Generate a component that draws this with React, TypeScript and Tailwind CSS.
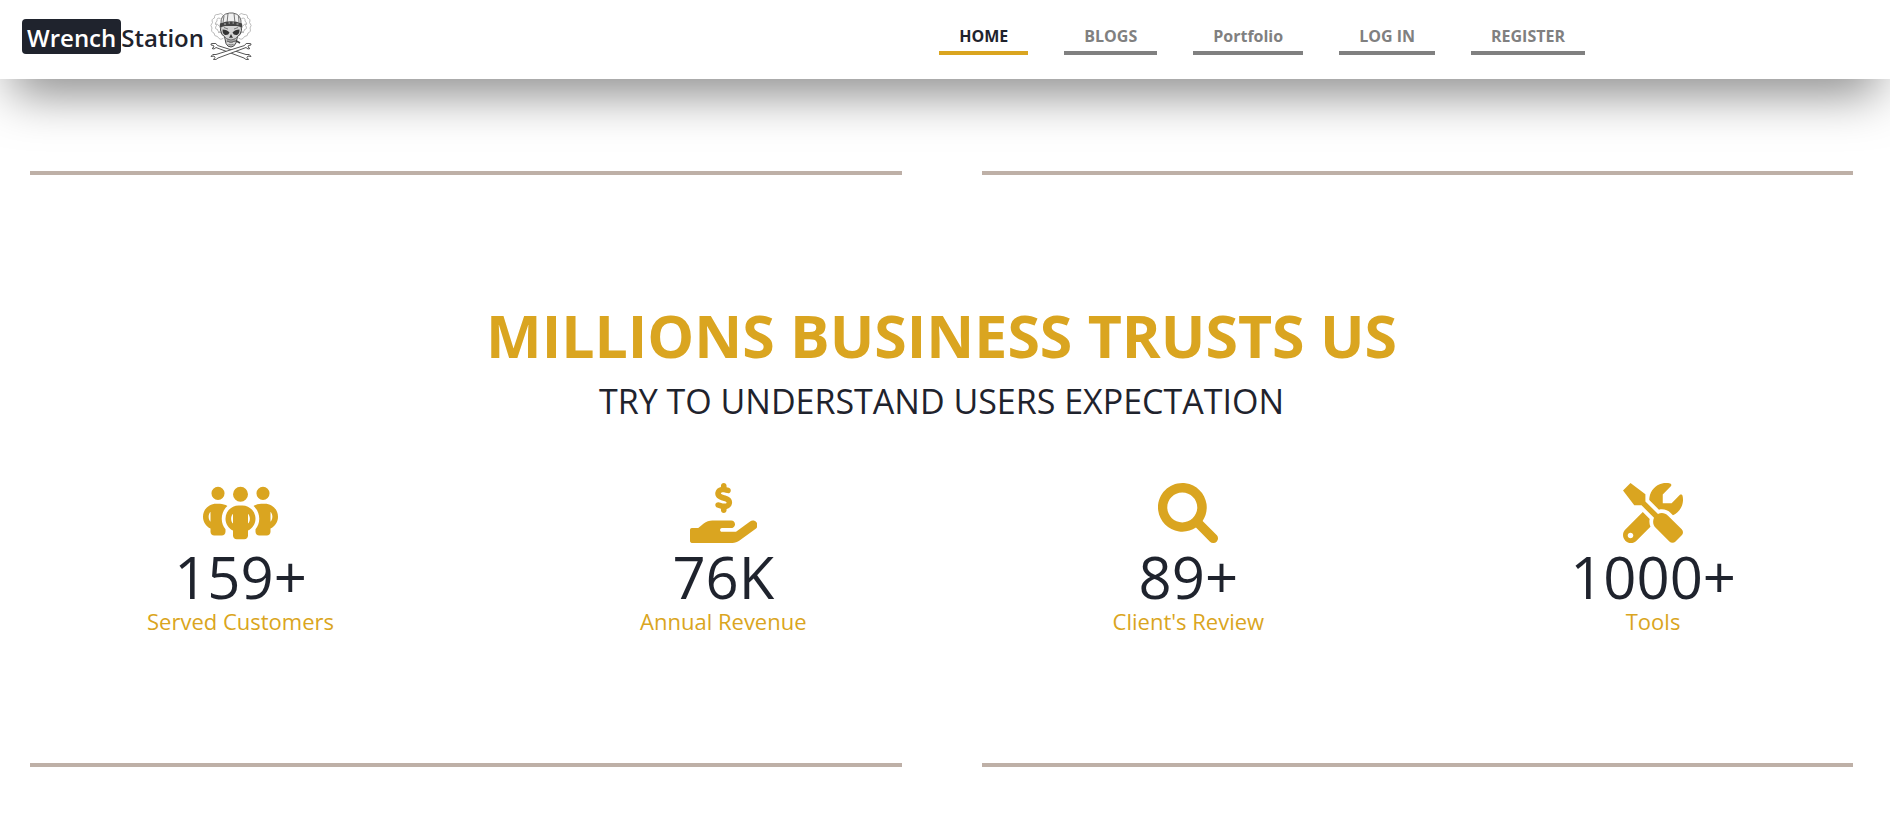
import type { ReactNode } from "react";
import { FaPeopleGroup } from "react-icons/fa6";

const links = ["HOME", "BLOGS", "Portfolio", "LOG IN", "REGISTER"];

function Icon({ width, d }: { width: number; d: string }) {
  return (
    <svg viewBox={`0 0 ${width} 512`} className="h-[60px]" fill="currentColor" aria-hidden="true">
      <path d={d} />
    </svg>
  );
}

const handPath =
  "M568.2 336.3c-13.12-17.81-38.14-21.66-55.93-8.469l-119.7 88.17h-120.6c-8.748 0-15.1-7.25-15.1-15.99c0-8.75 7.25-16 15.1-16h78.25c15.1 0 30.75-10.88 33.37-26.62c3.25-20-12.12-37.38-31.62-37.38H191.1c-26.1 0-53.12 9.25-74.12 26.25l-46.5 37.74L15.1 383.1C7.251 383.1 0 391.3 0 400v95.98C0 504.8 7.251 512 15.1 512h346.1c22.03 0 43.92-7.188 61.7-20.27l135.1-99.52C577.5 379.1 581.3 354.1 568.2 336.3zM279.3 175C271.7 173.9 261.7 170.3 252.9 167.1L248 165.4C235.5 160.1 221.8 167.5 217.4 179.1s2.121 26.2 14.59 30.64l4.655 1.656c8.486 3.061 17.88 6.095 27.39 8.312V232c0 13.25 10.73 24 23.98 24s24-10.75 24-24V221.6c25.27-5.723 42.88-21.85 46.1-45.72c8.688-50.05-38.89-63.66-64.42-70.95L288.4 103.1C262.1 95.64 263.6 92.42 264.3 88.31c1.156-6.766 15.3-10.06 32.21-7.391c4.938 .7813 11.37 2.547 19.65 5.422c12.53 4.281 26.21-2.312 30.52-14.84s-2.309-26.19-14.84-30.53c-7.602-2.627-13.92-4.358-19.82-5.721V24c0-13.25-10.75-24-24-24s-23.98 10.75-23.98 24v10.52C238.8 40.23 221.1 56.25 216.1 80.13C208.4 129.6 256.7 143.8 274.9 149.2l6.498 1.875c31.66 9.062 31.15 11.89 30.34 16.64C310.6 174.5 296.5 177.8 279.3 175z";

const glassPath =
  "M500.3 443.7l-119.7-119.7c27.22-40.41 40.65-90.9 33.46-144.7C401.8 87.79 326.8 13.32 235.2 1.723C99.01-15.51-15.51 99.01 1.724 235.2c11.6 91.64 86.08 166.7 177.6 178.9c53.8 7.189 104.3-6.236 144.7-33.46l119.7 119.7c15.62 15.62 40.95 15.62 56.57 0C515.9 484.7 515.9 459.3 500.3 443.7zM79.1 208c0-70.58 57.42-128 128-128s128 57.42 128 128c0 70.58-57.42 128-128 128S79.1 278.6 79.1 208z";

const toolsPath =
  "M331.8 224.1c28.29 0 54.88 10.99 74.86 30.97l19.59 19.59c40.01-17.74 71.25-53.3 81.62-96.65c5.725-23.92 5.34-47.08 .2148-68.4c-2.613-10.88-16.43-14.51-24.34-6.604l-68.9 68.9h-75.6V97.2l68.9-68.9c7.912-7.912 4.275-21.73-6.604-24.34c-21.32-5.125-44.48-5.51-68.4 .2148c-55.3 13.23-98.39 60.22-107.2 116.4C224.5 128.9 224.2 137 224.3 145l82.78 82.86C315.2 225.1 323.5 224.1 331.8 224.1zM384 278.6c-23.16-23.16-57.57-27.57-85.39-13.9L191.1 158L191.1 95.99l-127.1-95.99L0 63.1l96 127.1l62.04 .0077l106.7 106.6c-13.67 27.82-9.251 62.23 13.91 85.39l117 117.1c14.62 14.5 38.21 14.5 52.71-.0016l52.75-52.75c14.5-14.5 14.5-38.08-.0016-52.71L384 278.6zM227.9 307L168.7 247.9l-148.9 148.9c-26.37 26.37-26.37 69.08 0 95.45C32.96 505.4 50.21 512 67.5 512s34.56-6.592 47.73-19.78l119.1-119.1C225.5 352.3 222.6 329.4 227.9 307zM64 472c-13.25 0-24-10.75-24-24c0-13.26 10.75-24 24-24S88 434.7 88 448C88 461.3 77.25 472 64 472z";

const stats: { icon: ReactNode; value: string; label: string }[] = [
  {
    icon: <FaPeopleGroup className="h-[60px] w-[75px]" />,
    value: "159+",
    label: "Served Customers",
  },
  { icon: <Icon width={576} d={handPath} />, value: "76K", label: "Annual Revenue" },
  { icon: <Icon width={512} d={glassPath} />, value: "89+", label: "Client's Review" },
  { icon: <Icon width={512} d={toolsPath} />, value: "1000+", label: "Tools" },
];

function Wrench() {
  return (
    <path
      d="M6 63 Q1 62 2 66 L7 67 L8 70 L4 73 Q8 76 12 71 L68 92 Q71 96 77 95 L74 91 L76 88 L82 89 Q80 83 72 85 L15 67 Q13 61 6 63Z"
      fill="#fff"
      stroke="#555"
      strokeWidth="2"
    />
  );
}

function SkullLogo() {
  return (
    <svg viewBox="0 0 84 96" className="h-12 w-[42px]" aria-hidden="true">
      <g fill="none" stroke="#aaa" strokeWidth="1.6">
        <path d="M27 7 Q22 0 16 5 Q8 4 9 12 Q2 14 5 21 Q-1 27 4 32 Q1 40 8 42 Q8 49 15 49 Q20 58 27 52" />
        <path d="M57 7 Q62 0 68 5 Q76 4 75 12 Q82 14 79 21 Q85 27 80 32 Q83 40 76 42 Q76 49 69 49 Q64 58 57 52" />
        <path d="M21 13 Q13 10 14 18 Q8 22 13 27 Q8 34 15 35 Q16 42 23 40 M10 24 Q16 23 18 28 M16 42 Q20 37 24 45" />
        <path d="M63 13 Q71 10 70 18 Q76 22 71 27 Q76 34 69 35 Q68 42 61 40 M74 24 Q68 23 66 28 M68 42 Q64 37 60 45" />
      </g>
      <Wrench />
      <g transform="translate(84 0) scale(-1 1)">
        <Wrench />
      </g>
      <path
        d="M22 27 L62 27 Q65 37 60 45 L55 49 L52 62 Q48 70 42 70 Q35 70 32 63 L29 49 L24 45 Q19 36 22 27Z"
        fill="#d4d4d4"
        stroke="#444"
        strokeWidth="2"
      />
      <path d="M22 25 Q20 4 39 2 L46 2 Q64 5 62 25Z" fill="#f0f0f0" stroke="#666" strokeWidth="2" />
      <path d="M36 3 L34 22 M48 3 L50 22 M28 8 L26 21 M57 8 L58 21" stroke="#777" strokeWidth="2" fill="none" />
      <path d="M20 23 Q42 14 64 23 L65 31 Q42 23 19 31Z" fill="#444" />
      <path d="M28 24 h4 M37 22 h3 M45 22 h3 M53 24 h4" stroke="#bbb" strokeWidth="2" />
      <path d="M25 35 Q34 35 39 41 Q37 47 30 46 Q25 44 25 35Z M59 35 Q50 35 45 41 Q47 47 54 46 Q59 44 59 35Z" fill="#333" />
      <path d="M42 44 L38 52 L41 51 L42 53 L43 51 L46 52Z" fill="#333" />
      <path d="M32 53 Q42 59 52 53 M33 58 Q42 63 51 58 M36 54 V60 M40 56 V62 M44 56 V62 M48 54 V60 M37 65 Q42 67 47 65" stroke="#555" strokeWidth="1.6" fill="none" />
      <path d="M51 57 L60 62" stroke="#444" strokeWidth="3" />
      <path d="M27 47 L32 52 M57 47 L52 52 M28 31 L36 34 M56 31 L48 34" stroke="#666" strokeWidth="1.6" />
    </svg>
  );
}

function Divider() {
  return (
    <div className="grid grid-cols-2 gap-20">
      <hr className="border-t-4 border-[#beb0a7]" />
      <hr className="border-t-4 border-[#beb0a7]" />
    </div>
  );
}

export default function App() {
  return (
    <div className="min-h-screen bg-white font-['Open_Sans','Noto_Sans',sans-serif] text-[#1f232d]">
      <header className="flex h-[79px] items-start justify-between bg-white pr-[305px] pl-[22px] shadow-[0_25px_50px_-12px_rgba(0,0,0,0.5)]">
        <a href="#" className="flex items-center pt-3 text-2xl leading-[33px] font-semibold">
          <span className="rounded bg-[#1f232d] px-[5px] pt-0.5 text-white">Wrench</span>
          <span className="pt-0.5">Station</span>
          <span className="ml-1.5">
            <SkullLogo />
          </span>
        </a>
        <nav className="flex gap-9 pt-6 text-base font-bold">
          {links.map((link, i) => (
            <a
              key={link}
              href="#"
              className={
                i === 0
                  ? "border-b-4 border-[#daa520] px-5 pb-0.5 leading-[25px] whitespace-nowrap"
                  : "border-b-4 border-[#808080] px-5 pb-0.5 leading-[25px] whitespace-nowrap text-[#808080]"
              }
            >
              {link}
            </a>
          ))}
        </nav>
      </header>
      <main className="pt-[92px] pr-[37px] pl-[30px]">
        <Divider />
        <section className="pt-[130px] pb-32 text-center">
          <h1 className="text-[59px] leading-[60px] font-bold text-[#daa520]">MILLIONS BUSINESS TRUSTS US</h1>
          <p className="pt-2.5 text-[34px] leading-[53px]">TRY TO UNDERSTAND USERS EXPECTATION</p>
          <div className="-mr-9 -ml-9 flex justify-around pt-[55px]">
            {stats.map((stat) => (
              <div key={stat.label} className="flex flex-col items-center">
                <span className="text-[#daa520]">{stat.icon}</span>
                <strong className="pt-1 text-[58px] leading-[60px] font-normal">{stat.value}</strong>
                <span className="text-[22px] leading-7 text-[#daa520]">{stat.label}</span>
              </div>
            ))}
          </div>
        </section>
        <Divider />
      </main>
    </div>
  );
}
